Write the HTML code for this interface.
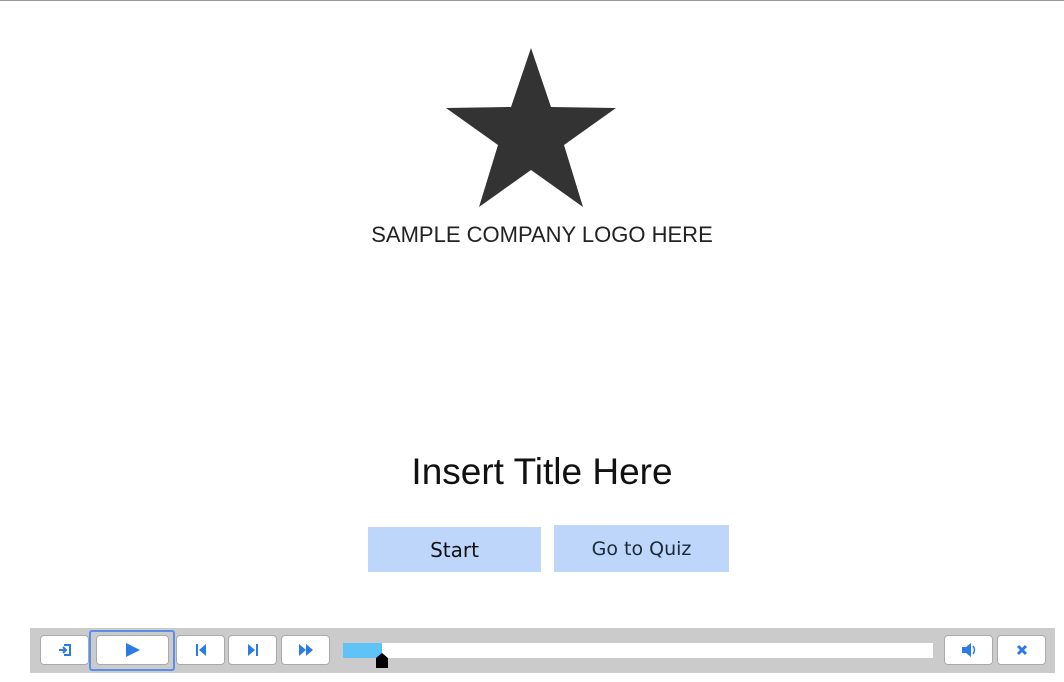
<!DOCTYPE html>
<html><head><style>
body{margin:0;width:1064px;height:682px;background:#fff;position:relative;overflow:hidden;font-family:"Liberation Sans",sans-serif}
.a{position:absolute}
.btn{position:absolute;top:635px;height:30px;background:#fff;border:1px solid #aaa;border-radius:4px;box-sizing:border-box;display:flex;align-items:center;justify-content:center}
</style></head><body>
<div class="a" style="left:0;top:0;width:1064px;height:1px;background:#999"></div>
<svg class="a" style="left:446px;top:48px" width="171" height="160" viewBox="0 0 171 160">
<polygon points="85,0 105,59 170,60 118,97 137,159 85,122 33,159 52,97 0,60 65,59" fill="#333"/>
</svg>
<div class="a" style="left:342px;top:222px;width:400px;text-align:center;font-size:22px;color:#222">SAMPLE COMPANY LOGO HERE</div>
<div class="a" style="left:342px;top:451px;width:400px;text-align:center;font-size:37px;color:#111">Insert Title Here</div>
<div class="a" style="left:368px;top:527px;width:173px;height:45px;background:#bfd6fb;font-size:20px;color:#111;display:flex;align-items:center;justify-content:center;font-family:'DejaVu Sans',sans-serif">Start</div>
<div class="a" style="left:554px;top:525px;width:175px;height:47px;background:#bfd6fb;font-size:19px;color:#1a2a3a;display:flex;align-items:center;justify-content:center;font-family:'DejaVu Sans',sans-serif">Go to Quiz</div>
<div class="a" style="left:30px;top:628px;width:1025px;height:45px;background:#cbcbcb"></div>
<div class="btn" style="left:40px;width:49px"><svg width="14" height="14"><path d="M6 2h6v10H6" fill="none" stroke="#2a7be4" stroke-width="2"/><path d="M1 7h6M5 4l3 3-3 3" fill="none" stroke="#2a7be4" stroke-width="2"/></svg></div>
<div class="a" style="left:89px;top:630px;width:86px;height:41px;border:2px solid #5a8fe8;border-radius:3px;box-sizing:border-box"></div>
<div class="btn" style="left:96px;width:73px"><svg width="16" height="14"><polygon points="1,0 15,7 1,14" fill="#2a7be4"/></svg></div>
<div class="btn" style="left:176px;width:49px"><svg width="12" height="14"><rect x="1" y="1" width="2" height="12" fill="#2a7be4"/><polygon points="11,1 4,7 11,13" fill="#2a7be4"/></svg></div>
<div class="btn" style="left:228px;width:49px"><svg width="12" height="14"><rect x="9" y="1" width="2" height="12" fill="#2a7be4"/><polygon points="1,1 8,7 1,13" fill="#2a7be4"/></svg></div>
<div class="btn" style="left:281px;width:49px"><svg width="16" height="14"><polygon points="1,1 8,7 1,13" fill="#2a7be4"/><polygon points="8,1 15,7 8,13" fill="#2a7be4"/></svg></div>
<div class="a" style="left:343px;top:643px;width:590px;height:15px;background:#fff"></div>
<div class="a" style="left:343px;top:643px;width:39px;height:15px;background:#5fc4f5"></div>
<svg class="a" style="left:375px;top:653px" width="14" height="15"><polygon points="7,0 13,5 13,15 1,15 1,5" fill="#000"/></svg>
<div class="btn" style="left:944px;width:49px"><svg width="16" height="16"><polygon points="1,5 5,5 10,1 10,15 5,11 1,11" fill="#2a7be4"/><path d="M12 4q3 4 0 8" fill="none" stroke="#2a7be4" stroke-width="1.5"/></svg></div>
<div class="btn" style="left:997px;width:49px"><svg width="12" height="12"><path d="M2 2l8 8M10 2l-8 8" stroke="#2a7be4" stroke-width="3"/></svg></div>
</body></html>
